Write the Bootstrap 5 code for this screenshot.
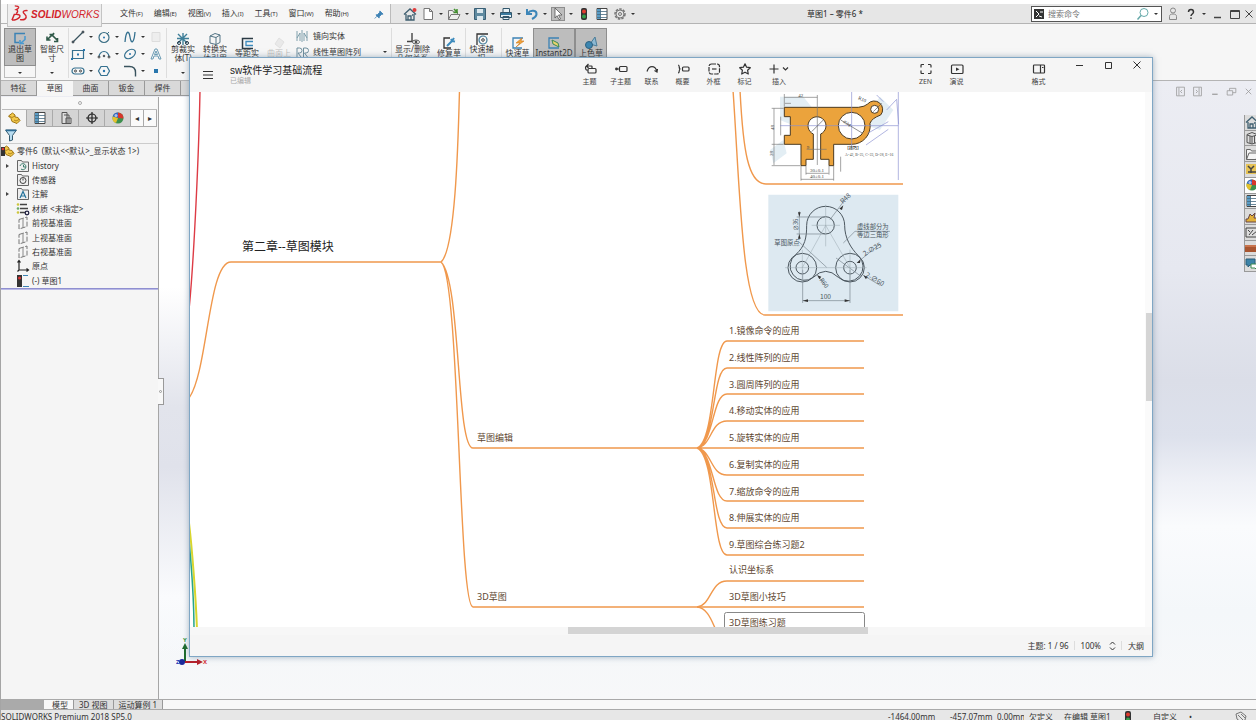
<!DOCTYPE html>
<html lang="zh-CN">
<head>
<meta charset="utf-8">
<meta name="viewport" content="width=device-width, initial-scale=1">
<title>草图1 – 零件6 * SOLIDWORKS</title>
<link rel="stylesheet" href="https://cdn.jsdelivr.net/npm/bootstrap@5.3.0/dist/css/bootstrap.min.css">
<style>
:root{--ink:#333;--line:#b4b4b4}
body{font:8px/12px "Noto Sans","Noto Sans CJK SC",sans-serif;color:var(--ink);background:#fff;overflow:hidden}
button{background:none;border:0;padding:0;margin:0;color:inherit;font:inherit;line-height:inherit;white-space:nowrap}
svg{display:block;flex:none}
.ic{width:14px;height:14px;fill:none;stroke:#444;stroke-width:1}
.app-shell{height:100vh;border-left:1px solid #a5a5a5}
.caret{width:12px;height:14px;display:flex;align-items:center;justify-content:center}
.caret::before{content:"";border:2px solid transparent;border-top-color:#333;border-bottom:0}

/* title bar */
.title-bar{height:24px;padding-top:4px;border-bottom:1px solid var(--line)}
.title-bar .strip{background:#e6e6e6}
.menu-strip{width:390px;background:#f6f6f6;border-right:1px solid #bbb}
.logo-box{width:95px;height:23px;margin-left:6px;background:#eee;border:1px solid #c4c4c4;border-top:0;position:relative;z-index:1;padding-left:3px}
.logo-text{font:italic 10px/22px "Liberation Sans",sans-serif;color:#d3242b;margin-left:2px}
.menus{gap:11px;margin-left:18px}
.menus small{font-size:6px}
.pressed{background:#bdbdbd;box-shadow:inset 0 0 0 1px #8e8e8e}
.doc-title{font-size:8px;color:#222}
.search-box{width:131px;height:16px;background:#fff;border:1px solid #555;padding:0 0 0 2px}
.search-box input{border:0;outline:0;background:none;width:88px;height:14px;padding:0;font:inherit;color:#777}

/* ribbon */
.ribbon{height:56px;background:#f6f6f6;padding:4px 0 0 3px}
.tool{display:flex;flex-direction:column;align-items:center;font-size:8px;line-height:9px;padding-top:4px;width:32px;height:38px}
.tool .ic{margin-bottom:-2px}
.tool.low{padding-top:8px}
.tool-col{height:50px}
.tool.w40{width:42px}
.exit-box{box-shadow:inset 0 0 0 1px #bbb}
.sketch-grid{display:grid;grid-template-columns:26px 26px 26px 18px;grid-auto-rows:17px;align-items:center;border-left:1px solid #ddd;border-right:1px solid #ddd;padding-left:2px;width:99px;height:50px}
.pattern-list{width:96px;line-height:16px}
.vr-line{border-left:1px solid #ddd}

/* workspace */
.workspace{border-top:1px solid var(--line);background:linear-gradient(#ecedf3 0,#e6e8f0 190px,#dbdee8 300px,#dde1ec 355px,#eef0f6 400px,#fafbfd 445px,#f4f7fa 530px,#f7f8f9)}
.cmd-tabs{height:16px}
.ctab{width:36px;height:15px;background:#d9d9d9;border-right:1px solid #999;border-bottom:1px solid #999;color:#333}
.ctab.on{background:#f6f6f6;border-color:#f6f6f6}
.mdi{padding-top:4px;gap:6px;margin-right:2px}
.mdi .ic{stroke:#999;width:11px;height:11px}
.tree-panel{width:158px;background:#f5f5f5;border-right:1px solid #a6a6a6}
.canvas-zone{background:linear-gradient(#fff 0,#fff 190px,#e2e4ec 310px,#e0e2eb 370px,#fafbfd 500px,#fff0 560px) 0 0/60px 100% no-repeat}
.grip{height:13px;margin:0 1px;border-bottom:1px solid #bbb;background:#f8f8f8}
.grip i{width:4px;height:4px;border:1px solid #aaa;border-radius:50%}
.ptab{width:26px;height:17px;display:flex;align-items:center;justify-content:center;background:#d4d4d4;border-right:1px solid #aaa;border-bottom:1px solid #aaa}
.ptab.on{background:#f5f5f5;border-bottom-color:#f5f5f5}
.ptab.arr{width:13px;background:#fafafa}
.filter{height:17px;border-bottom:1px solid #ccc;padding-left:3px}
.feature-tree{height:144px;margin:0;padding:0;list-style:none}
.feature-tree li{flex:1;display:flex;align-items:center;padding-left:15px;gap:2px;position:relative}
.feature-tree li.root{padding-left:0}
.feature-tree li.kids::before{content:"";position:absolute;left:5px;border:2px solid transparent;border-left:3px solid #444;border-right:0}
.rollback{height:2px;background:#b9b9e6;border-top:1px solid #8f8fd0}
.splitter{position:absolute;left:-1px;top:281px;width:6px;height:27px;background:#f8f8f8;border:1px solid #999;border-left:0}
.splitter i{width:3px;height:3px;border:1px solid #999;border-radius:50%}
.triad{position:absolute;left:17px;bottom:29px;font-size:6px;font-weight:700}
.task-pane{width:12px;height:157px;margin-top:18px;border-left:1px solid #999}
.task-pane button{flex:1;overflow:hidden;background:#dcdcdc;border-bottom:1px solid #999}

/* bottom */
.model-tabs{height:11px;background:#f8f8f8;border-top:1px solid #a9a9a9;border-bottom:1px solid #aaa;line-height:9px}
.model-tabs .nav-arrows{width:43px;background:#aaa}
.model-tabs button{height:9px;padding:0 5px;background:#ddd;border-right:1px solid #999}
.model-tabs button.on{background:#f8f8f8;padding:0 5px 0 8px}
.status-bar{height:10px;background:#e7e7e7;line-height:14px}
.status-bar span{flex:none;white-space:nowrap}
.st-a{width:62px}.st-b{width:47px}.st-c{width:27px;margin-right:5px;overflow:hidden}.st-d{width:35px}.st-e{width:57px}.st-f{width:32px}.st-g{width:36px}.st-h{width:45px}.st-i{width:8px}

/* mind-map window */
.map-window{position:absolute;left:189px;top:57px;right:103px;bottom:63px;background:#fff;border:1px solid #7fa6c4;box-shadow:0 0 6px #5a7a9488}
.map-head{height:34px;background:#f5f5f5}
.map-head .name{font:10px/11px "Liberation Sans","Noto Sans CJK SC",sans-serif;color:#222;margin-top:7px}
.map-head .sub{font-size:7px;line-height:9px;color:#aaa}
.mtool{width:31px;font-size:7px;line-height:9px;display:flex;flex-direction:column;align-items:center;color:#444;padding-top:4px}
.mtool .ic{stroke:#333;stroke-width:1.2;margin-bottom:1px}
.mtool.insert{width:38px}
.ic.wide{width:22px}
.map-tools{margin-right:112px}
.zen-tools{margin-right:51px}
.fmt-tool{margin-right:11px}
.win-btns .ic{stroke:#333;margin:0 8px 0 7px}
.map-body{background:#fff}
.map-body>svg{position:absolute;left:0;top:0}
.topic{position:absolute;font:9px/12px "Noto Sans","Noto Sans CJK SC",sans-serif;color:#5d4630;margin:0}
.topic.big{font-size:12px;line-height:16px;color:#222;left:52px;top:147px}
.t-edit{left:287px;top:340px}
.t-3d{left:287px;top:499px}
ul.topic{list-style:none;padding:0;display:flex;flex-direction:column;justify-content:space-between}
.apply-list{left:539px;top:233px;height:226px}
.three-list{left:539px;top:472px;height:65px}
.vbar{position:absolute;right:0;top:0;bottom:0;width:7px;background:#fafafa}
.vbar i{position:absolute;top:221px;right:0;width:6px;height:88px;background:#d5d5d5}
.hbar{height:8px;background:#f7f7f7}
.hbar i{display:block;margin-left:378px;width:300px;height:7px;background:#d4d4d4}
.map-foot{height:21px;background:#f5f5f5;padding-right:8px;color:#333}
.map-foot .sep{width:1px;height:9px;background:#ddd;margin:0 5px}
.map-foot .sep+button{margin-left:1px}
</style>
</head>
<body>
<svg width="0" height="0" class="position-absolute" aria-hidden="true">
  <symbol id="i-home" viewBox="0 0 14 14"><path d="M1 7.500 7 2l6 5.500M3 7v6h8V7M5 13V9h3v4M9 8h1" stroke="#3f5f70" stroke-width="1.300"/></symbol>
  <symbol id="i-new" viewBox="0 0 14 14"><path d="M3 1.500h5.500l3 3v8H3zM8.500 1.500v3h3" fill="#fff" stroke="#777"/></symbol>
  <symbol id="i-open" viewBox="0 0 14 14"><path d="M1.500 12.500v-9h4l1 1.500h4v3M1.500 12.500 4 7.500h9l-2.500 5z" fill="#eee" stroke="#777"/><path d="m7 2 3 3m0-3v3.500H6.500" stroke="#43912f" stroke-width="1.500"/></symbol>
  <symbol id="i-save" viewBox="0 0 14 14"><path d="M1.500 1.500h11v11h-11z" fill="#5f8aa0" stroke="#3a5f75"/><path d="M4 2h6v4H4zM4 9h6v4H4z" fill="#dce8ee" stroke="none"/></symbol>
  <symbol id="i-print" viewBox="0 0 14 14"><path d="M4 5V1.500h6.500V5M1.500 5.500h11v5h-11zM4 9.500h6v3H4z" fill="#e8f2f7" stroke="#32566b"/><path d="M2 6h10v2H2z" fill="#3a7ba0" stroke="none"/></symbol>
  <symbol id="i-undo" viewBox="0 0 14 14"><path d="M2 2v5h5M2.500 6.500C6 2 12 3.500 11.500 7.500 11 10 9 11 7 12" stroke="#3d86b8" stroke-width="2"/></symbol>
  <symbol id="i-arrow" viewBox="0 0 14 14"><path d="m4 1 7 7H7.500l2 4-1.500.700-2-4L4 11z" fill="#fff" stroke="#555" stroke-width=".8"/></symbol>
  <symbol id="i-light" viewBox="0 0 14 14"><rect x="4" y="1" width="6" height="12" rx="2" fill="#333" stroke="none"/><circle cx="7" cy="4.500" r="2" fill="#e23a2e" stroke="none"/><circle cx="7" cy="9.500" r="2" fill="#35a04a" stroke="none"/></symbol>
  <symbol id="i-list" viewBox="0 0 14 14"><path d="M2 1.500h10v11H2z" fill="#fff"/><path d="M2 2h3.500v10H2z" fill="#5a9cc5" stroke="none"/><path d="M2 4.500h10M2 7.500h10M2 10.500h10M5.500 2v10" stroke="#456a80" stroke-width=".8"/></symbol>
  <symbol id="i-gear" viewBox="0 0 14 14"><circle cx="7" cy="7" r="5" stroke-dasharray="2.500 1.200" stroke-width="1.500" stroke="#777"/><circle cx="7" cy="7" r="4" stroke="#777"/><circle cx="7" cy="7" r="1.500" stroke="#777"/></symbol>
  <symbol id="i-pin" viewBox="0 0 14 14"><path d="m8 3 4 4-2 .500L7.500 10 7 12 3 8l2-.500L7.500 5zM4.500 9.500 1.500 12.500" fill="#3f83b5" stroke="#3f83b5" transform="translate(1.500 1.500) scale(.8)"/></symbol>
  <symbol id="i-lens" viewBox="0 0 14 14"><circle cx="8" cy="5.500" r="4" stroke="#6aa"/><path d="M5 8.500 1.500 12.500" stroke="#6aa" stroke-width="1.500"/></symbol>
  <symbol id="i-user" viewBox="0 0 14 14"><circle cx="7" cy="3.500" r="2.500" stroke="#888"/><path d="M3.500 12.500v-3C3.500 7.500 5 7 7 7s3.500.500 3.500 2.500v3z" stroke="#888"/></symbol>
  <symbol id="i-help" viewBox="0 0 14 14"><path d="M4.500 5c0-3.500 5-3.500 5 0 0 2-2.500 2-2.500 4M7 10.500v1.500" stroke="#333" stroke-width="1.500"/></symbol>
  <symbol id="i-min" viewBox="0 0 14 14"><path d="M4 10.500h7" stroke-width="1.500"/></symbol>
  <symbol id="i-max" viewBox="0 0 14 14"><path d="M2.500 3.500h9v8h-9z"/><path d="M2.500 4.500h9"/></symbol>
  <symbol id="i-x" viewBox="0 0 14 14"><path d="m3.500 3.500 7 7m0-7-7 7"/></symbol>
  <symbol id="i-exit" viewBox="0 0 14 14"><path d="M12 1.500H2v9h4" stroke="#3c83b5" stroke-width="1.500"/><path d="M12 4v3.500L8 11M7 8v3.500h4" stroke="#4b9bd0" stroke-width="1.600"/></symbol>
  <symbol id="i-dim" viewBox="0 0 14 14"><path d="M2 8 7 3l5 5M2 4.500V8h3.500M4.500 2.500h3.500l1-1.500M9 9.500h3.500V6M7 3l2-1.500" stroke="#2f5948" stroke-width="1.600"/></symbol>
  <symbol id="i-line" viewBox="0 0 14 14"><path d="M2 12 12 2" stroke="#39535e" stroke-width="1.200"/><circle cx="2" cy="12" r="1" fill="#3c7ea8"/><circle cx="12" cy="2" r="1" fill="#3c7ea8"/></symbol>
  <symbol id="i-circ" viewBox="0 0 14 14"><circle cx="7" cy="7.500" r="5" stroke="#3b6f85" stroke-width="1.200"/><circle cx="7" cy="7.500" r="1" fill="#2876ad" stroke="none"/><path d="m10 4 2-2" stroke="#3b6f85"/></symbol>
  <symbol id="i-spline" viewBox="0 0 14 14"><path d="M2 12C3 0 6 0 7 7s4 7 5-5" stroke="#34708f" stroke-width="1.300"/></symbol>
  <symbol id="i-rect" viewBox="0 0 14 14"><path d="M1.500 3.500h11v8h-11z" stroke="#34708f" stroke-width="1.200"/><path d="M6 6.500h2v2H6zM12 2h2v2h-2zM0 11h2v2H0z" fill="#2876ad" stroke="none"/></symbol>
  <symbol id="i-arc" viewBox="0 0 14 14"><path d="M2 10a5 5.500 0 0 1 10 0" stroke="#34708f" stroke-width="1.200"/><circle cx="2" cy="10" r="1"/><circle cx="12" cy="10" r="1"/><circle cx="7" cy="9" r=".8" fill="#2876ad"/></symbol>
  <symbol id="i-ell" viewBox="0 0 14 14"><ellipse cx="7" cy="7" rx="6" ry="4" transform="rotate(-35 7 7)" stroke="#34708f" stroke-width="1.200"/><circle cx="7" cy="7" r="1" fill="#2876ad" stroke="none"/></symbol>
  <symbol id="i-slot" viewBox="0 0 14 14"><rect x="1" y="4" width="12" height="6" rx="3" stroke="#34708f" stroke-width="1.200"/><circle cx="4.500" cy="7" r="1"/><circle cx="9.500" cy="7" r="1"/></symbol>
  <symbol id="i-hex" viewBox="0 0 14 14"><path d="M4 2.500h6L12.500 7 10 11.500H4L1.500 7z" stroke="#34708f" stroke-width="1.200"/><circle cx="7" cy="7" r="1.200" fill="#2876ad" stroke="none"/></symbol>
  <symbol id="i-fillet" viewBox="0 0 14 14"><path d="M1 2.500h5.500c4 0 6 2 6 6v4" stroke="#39535e" stroke-width="1.400"/></symbol>
  <symbol id="i-sheet" viewBox="0 0 14 14"><path d="M3 2.500h8v9H3z" stroke="#ddd" fill="#eee"/></symbol>
  <symbol id="i-A" viewBox="0 0 14 14"><path d="m2 12 4-10h2l4 10h-2L9 9H5l-1 3zM5.500 7.500h3L7 4z" stroke="#5c92ad" stroke-width=".9"/></symbol>
  <symbol id="i-dot" viewBox="0 0 14 14"><path d="M5 5h4v4H5z" fill="#2876ad" stroke="none"/></symbol>
  <symbol id="i-trim" viewBox="0 0 14 14"><path d="m2 2 9 9M2 11l9-9M7 1v12M1 6.500h12" stroke="#3f7f99" stroke-width="1.400"/><circle cx="3" cy="11" r="1.500" stroke="#234"/><circle cx="11" cy="11" r="1.500" stroke="#234"/></symbol>
  <symbol id="i-conv" viewBox="0 0 14 14"><path d="M2 4 7 1.500 12 3v7.500L8 12.500 2 11zM2 4l6 1.500v7M8 5.500 12 3" stroke="#537485"/></symbol>
  <symbol id="i-off" viewBox="0 0 14 14"><path d="M13 2.500H2.500v10H13" stroke="#2b3b45" stroke-width="1.500"/><path d="M13 5.500H6v4h7" stroke="#3d8bbd" stroke-width="1.300"/></symbol>
  <symbol id="i-surf" viewBox="0 0 14 14"><path d="m3 8 4-6 5 4-4 6z" fill="#ddd" stroke="#ccc"/></symbol>
  <symbol id="i-mirror" viewBox="0 0 14 14"><path d="M2 2v10M5 12V4L2 9M7 1v12M12 2v10M9 12V4l3 5" stroke="#7497a5" stroke-width=".9"/></symbol>
  <symbol id="i-patt" viewBox="0 0 14 14"><path d="M2 12V3h2.500a2 2 0 0 1 0 5H3l3 4M8.500 12V3H11a2 2 0 0 1 0 5h-1.500l3 4" stroke="#6f8f9d"/></symbol>
  <symbol id="i-perp" viewBox="0 0 14 14"><path d="M6 1v8M1 9.500h9" stroke="#444" stroke-width="1.400"/><ellipse cx="10" cy="10" rx="3.500" ry="2" fill="#fff" stroke="#555"/><circle cx="10" cy="10" r="1" fill="#333"/></symbol>
  <symbol id="i-repair" viewBox="0 0 14 14"><path d="M8 2H2v10h7" stroke="#333" stroke-width="1.300"/><path d="m5 10 5-5m-1-2 1 2 3 .500M10 5l2-3" stroke="#3d8bbd" stroke-width="2"/></symbol>
  <symbol id="i-snap" viewBox="0 0 14 14"><path d="M2 13V2h11" stroke="#333" stroke-width="1.300"/><circle cx="8" cy="8" r="4" stroke="#3f7b99" stroke-width="1.200"/><circle cx="8" cy="8" r="1.300"/></symbol>
  <symbol id="i-rapid" viewBox="0 0 14 14"><path d="M12 2H2v10h9" stroke="#3c83b5" stroke-width="1.300"/><path d="m11 2-6 5h4l-4 4 8-6h-3z" fill="#f0a33c" stroke="#d07a1c" stroke-width=".6"/></symbol>
  <symbol id="i-inst" viewBox="0 0 14 14"><path d="M12 2H2v10h10" stroke="#3c83b5" stroke-width="1.300"/><path d="m5 4 6 3 1 4-6-3z" fill="#e9d36b" stroke="#3b8a58"/></symbol>
  <symbol id="i-shade" viewBox="0 0 14 14"><path d="m6 8 5-7 2 9z" fill="#8cb8d2" stroke="#4a7c98"/><circle cx="5" cy="9" r="3.500" fill="#3d86b0" stroke="#2d617f"/></symbol>
  <symbol id="i-part" viewBox="0 0 14 14"><path d="m1.500 5 4-3 2.500 2v2l3 .500 2 3-3 3-5-2-1-3z" fill="#f3c94a" stroke="#a07514"/><path d="m2 5 3 1.500L8 5M7 9l2 1 3-1.500" stroke="#a07514" stroke-width=".8"/></symbol>
  <symbol id="i-conf" viewBox="0 0 14 14"><path d="M3 1.500h5v11H3zM5 4h5v8.500M7 7h5v5.500H7z" fill="#ddd" stroke="#555"/></symbol>
  <symbol id="i-target" viewBox="0 0 14 14"><circle cx="7" cy="7" r="4" stroke-width="1.200" stroke="#222"/><path d="M7 1v12M1 7h12" stroke="#222" stroke-width="1.200"/></symbol>
  <symbol id="i-ball" viewBox="0 0 14 14"><g stroke="none"><circle cx="7" cy="7" r="5.500" fill="#3d8f4e"/><path d="M7 7V1.500a5.500 5.500 0 0 0-5.300 4z" fill="#3567c4"/><path d="M7 7 1.700 5.500A5.500 5.500 0 0 0 5 12.100z" fill="#e4c12c"/><path d="M7 7V1.500a5.500 5.500 0 0 1 5.400 6z" fill="#d8352a"/><circle cx="5" cy="4.500" r="1.500" fill="#fff9"/></g></symbol>
  <symbol id="i-funnel" viewBox="0 0 14 14"><path d="M1.500 2h11L8.500 7.500V12l-3 1V7.500z" fill="#b8dcf0" stroke="#33596e"/><path d="M2 2.500h10" stroke="#2b6b95" stroke-width="1.500"/></symbol>
  <symbol id="i-folder" viewBox="0 0 14 14"><path d="M1.500 12.500v-11h4l1 1.500h6v9.500z" fill="#eee" stroke="#666"/></symbol>
  <symbol id="i-fold-h" viewBox="0 0 14 14"><use href="#i-folder"/><path d="M4 7a3 3 0 1 1 1 3M7.500 6v2h2" stroke="#3c7c6c"/></symbol>
  <symbol id="i-fold-s" viewBox="0 0 14 14"><use href="#i-folder"/><circle cx="7" cy="7.500" r="3" stroke="#444"/><path d="M7 7.500V5.500" stroke="#444"/></symbol>
  <symbol id="i-fold-a" viewBox="0 0 14 14"><use href="#i-folder"/><path d="M4 11 7 4.500 10 11M5 9h4" stroke="#26749c" stroke-width="1.200"/></symbol>
  <symbol id="i-mat" viewBox="0 0 14 14"><path d="M4 2.500h7M4 6.500h8M4 10.500h5" stroke="#444" stroke-width="1.300"/><g stroke="none"><circle cx="2" cy="2.500" r="1.300" fill="#cdc63c"/><circle cx="2" cy="6.500" r="1.300" fill="#6aab6a"/><circle cx="2" cy="10.500" r="1.300" fill="#cdc63c"/></g><circle cx="11" cy="11" r="1.800" stroke="#224" stroke-width="1.300"/></symbol>
  <symbol id="i-plane" viewBox="0 0 14 14"><path d="M3 3.500 11 1v9.500L3 13z" stroke="#777" stroke-dasharray="5 1.500"/><path d="M7 2v10" stroke="#888"/></symbol>
  <symbol id="i-orig" viewBox="0 0 14 14"><path d="M3 2v9h9M1.500 3.500 3 1.500l1.500 2M10.500 9.500l2 1.500-2 1.500M1.500 12.500 3 11" stroke="#222" stroke-width="1.200"/></symbol>
  <symbol id="i-sk" viewBox="0 0 14 14"><rect x="1" y="1" width="5" height="12" fill="#333" stroke="none"/><circle cx="3.500" cy="4" r="1.500" fill="#d33" stroke="none"/><path d="M7 1.500h5M7 12.500h6" stroke="#3c83b5"/></symbol>
  <symbol id="i-dockl" viewBox="0 0 14 14"><path d="M2 1.500h10v11H2zM5 2v10M9 5 7 7l2 2"/></symbol>
  <symbol id="i-dockr" viewBox="0 0 14 14"><path d="M2 1.500h10v11H2zM9 2v10M5 5l2 2-2 2"/></symbol>
  <symbol id="i-rest" viewBox="0 0 14 14"><path d="M1.500 6h7v5.500h-7zM4.500 6V3h8v5.500h-4"/></symbol>
  <symbol id="i-cyl" viewBox="0 0 14 14"><path d="M2 3.500 7 1.500l5 2v8l-5 1.500-5-1.500zM2 4l5 1.500L12 4M5 5v7M7 5.500V13M9.500 5v7" fill="#ddd" stroke="#555"/></symbol>
  <symbol id="i-dir" viewBox="0 0 14 14"><path d="M1.500 12.500v-10h4l1 1.500h6v2M1.500 12.500 4 6h9.500l-2.500 6.500z" fill="#f4f4f4" stroke="#666"/></symbol>
  <symbol id="i-view" viewBox="0 0 14 14"><path d="M1 2h13v10H1z" fill="#e6c356" stroke="none"/><path d="m3 4 3 3 3-3M6 7v4M3 10h8" stroke="#444" stroke-width="1.500"/></symbol>
  <symbol id="i-stamp" viewBox="0 0 14 14"><path d="M1 12h12V8H9l1-5-3 3-2-2-2 5H1z" fill="#e2b13a" stroke="#644"/></symbol>
  <symbol id="i-pic" viewBox="0 0 14 14"><path d="M1 3h12v9H1z" fill="#ddd"/><path d="m3 5 2 2m3-2-4 5m3 0 5-4" stroke="#444"/></symbol>
  <symbol id="i-box" viewBox="0 0 14 14"><path d="M0 4h14v7H0z" fill="#a85530" stroke="none"/><path d="M0 4h14v2H0z" fill="#c8734d" stroke="none"/></symbol>
  <symbol id="i-chat" viewBox="0 0 14 14"><path d="M1 2h9v6H5l-2 2V8H1z" fill="#3c83a8" stroke="#2b5e7a"/><path d="M6 7h7v4h-1v2l-2-2H6z" fill="#fff" stroke="#3a8a50"/></symbol>
  <symbol id="m-top" viewBox="0 0 14 14"><rect x="5" y="6.500" width="8" height="4.500" rx="1"/><path d="M9 6V4.500Q9 4 8.500 4H4.500Q2.500 4 2.500 6T4.500 8.500M5.500 2 3.500 4l2 2"/></symbol>
  <symbol id="m-sub" viewBox="0 0 14 14"><rect x="5.500" y="4.500" width="7.500" height="5" rx="1"/><path d="M5 7H3"/><circle cx="2.500" cy="7" r=".8" fill="#333"/></symbol>
  <symbol id="m-rel" viewBox="0 0 14 14"><path d="M2 9.500c2-6.500 8-6.500 10 0M9.500 8.500l2.500 1.500.500-3"/></symbol>
  <symbol id="m-sum" viewBox="0 0 14 14"><path d="M2 3c2.500 0 0 4 2.500 4C2 7 4.500 11 2 11"/><rect x="6.500" y="5" width="6.500" height="4" rx="1"/></symbol>
  <symbol id="m-box" viewBox="0 0 14 14"><rect x="2" y="2" width="10.500" height="10" rx="2.500" stroke-dasharray="4.500 1"/><path d="M5 7h4.500"/></symbol>
  <symbol id="m-star" viewBox="0 0 14 14"><path d="m7 1.800 1.600 3.400 3.700.500-2.700 2.600.700 3.700L7 10.200 3.700 12l.700-3.700L1.700 5.700l3.700-.500z" stroke-linejoin="round"/></symbol>
  <symbol id="m-plus" viewBox="0 0 22 14"><path d="M6 2.500v9M1.500 7h9M15 5.500l2.500 2.500L20 5.500"/></symbol>
  <symbol id="m-zen" viewBox="0 0 14 14"><path d="M2 5.500V3.500Q2 2.500 3 2.500h2M9 2.500h2q1 0 1 1v2M12 8.500v2q0 1-1 1H9M5 11.500H3q-1 0-1-1v-2"/></symbol>
  <symbol id="m-play" viewBox="0 0 14 14"><rect x="1.500" y="3" width="11.500" height="8.500" rx="1"/><path d="m6 5.500 3.500 1.700L6 9z" fill="#333" stroke="none"/></symbol>
  <symbol id="m-fmt" viewBox="0 0 14 14"><rect x="1.500" y="3" width="11" height="8" rx=".8"/><path d="M8.500 3v8M10 5.500h1.500"/></symbol>
</svg>

<div class="app-shell d-flex flex-column">
  <header class="title-bar d-flex flex-shrink-0">
    <div class="menu-strip d-flex flex-shrink-0">
      <div class="logo-box d-flex flex-shrink-0">
        <svg width="18" height="18" viewBox="0 0 36 38" fill="none" stroke="#d3242b" stroke-width="3"><path d="M7 4c5 0 9 1 8 4-1 2-3 3-5 4 4 1 4 5 0 8M1 34l5-12c9-1 14 1 11 6-3 4-8 6-16 6M34 14c-6-1-10 1-9 4s7 5 6 10-7 6-13 5"/></svg>
        <span class="logo-text"><b>SOLID</b>WORKS</span>
      </div>
      <nav class="menus d-flex align-items-center">
        <button>文件<small>(F)</small></button><button>编辑<small>(E)</small></button><button>视图<small>(V)</small></button><button>插入<small>(I)</small></button><button>工具<small>(T)</small></button><button>窗口<small>(W)</small></button><button>帮助<small>(H)</small></button>
      </nav>
      <button class="ms-auto me-1" aria-label="固定"><svg class="ic"><use href="#i-pin"/></svg></button>
    </div>
    <div class="strip d-flex align-items-center flex-grow-1">
      <div class="d-flex align-items-center flex-shrink-0 ps-2">
        <button aria-label="主页" class="ms-1"><svg class="ic"><use href="#i-home"/><circle cx="11.500" cy="3" r="2" fill="#e03b3b" stroke="none"/></svg></button>
        <button class="d-flex ms-1" aria-label="新建"><svg class="ic"><use href="#i-new"/></svg><span class="caret"></span></button>
        <button class="d-flex" aria-label="打开"><svg class="ic"><use href="#i-open"/></svg><span class="caret"></span></button>
        <button class="d-flex" aria-label="保存"><svg class="ic"><use href="#i-save"/></svg><span class="caret"></span></button>
        <button class="d-flex" aria-label="打印"><svg class="ic"><use href="#i-print"/></svg><span class="caret"></span></button>
        <button class="d-flex" aria-label="撤消"><svg class="ic"><use href="#i-undo"/></svg><span class="caret"></span></button>
        <button class="d-flex" aria-label="选择"><span class="pressed"><svg class="ic"><use href="#i-arrow"/></svg></span><span class="caret"></span></button>
        <button aria-label="重建模型"><svg class="ic"><use href="#i-light"/></svg></button>
        <button aria-label="文件属性" class="ms-1"><svg class="ic"><use href="#i-list"/></svg></button>
        <button aria-label="选项" class="d-flex ms-1"><svg class="ic"><use href="#i-gear"/></svg><span class="caret"></span></button>
      </div>
      <div class="doc-title flex-grow-1 text-center">草图1 – 零件6 *</div>
      <div class="search-box d-flex align-items-center flex-shrink-0">
        <svg width="10" height="10" viewBox="0 0 10 10"><path d="M0 0h10v10H0z" fill="#333"/><path d="m2 2 3 3-3 3M6 3h3M5 7l3 1" stroke="#fff" fill="none"/></svg>
        <label for="q" class="visually-hidden">搜索命令</label><input id="q" type="text" class="ms-1" placeholder="搜索命令">
        <svg class="ic ms-auto"><use href="#i-lens"/></svg><span class="caret"></span>
      </div>
      <button aria-label="登录" class="ms-1"><svg class="ic"><use href="#i-user"/></svg></button>
      <button class="ms-1" aria-label="帮助"><svg class="ic"><use href="#i-help"/></svg></button>
      <span class="caret"></span>
      <button aria-label="最小化"><svg class="ic"><use href="#i-min"/></svg></button>
      <button aria-label="最大化" class="ms-1"><svg class="ic"><use href="#i-max"/></svg></button>
      <button aria-label="关闭"><svg class="ic"><use href="#i-x"/></svg></button>
    </div>
  </header>

  <div class="ribbon d-flex flex-shrink-0">
    <div class="tool-col exit-box"><button class="tool pressed"><svg class="ic"><use href="#i-exit"/></svg>退出草<br>图</button><span class="caret mx-auto"></span></div>
    <div class="tool-col"><button class="tool"><svg class="ic"><use href="#i-dim"/></svg>智能尺<br>寸</button><span class="caret mx-auto"></span></div>
    <div class="sketch-grid">
      <button class="d-flex" aria-label="直线"><svg class="ic"><use href="#i-line"/></svg><span class="caret"></span></button>
      <button class="d-flex" aria-label="圆"><svg class="ic"><use href="#i-circ"/></svg><span class="caret"></span></button>
      <button class="d-flex" aria-label="样条曲线"><svg class="ic"><use href="#i-spline"/></svg><span class="caret"></span></button>
      <button aria-label="平面"><svg class="ic"><use href="#i-sheet"/></svg></button>
      <button class="d-flex" aria-label="矩形"><svg class="ic"><use href="#i-rect"/></svg><span class="caret"></span></button>
      <button class="d-flex" aria-label="圆弧"><svg class="ic"><use href="#i-arc"/></svg><span class="caret"></span></button>
      <button class="d-flex" aria-label="椭圆"><svg class="ic"><use href="#i-ell"/></svg><span class="caret"></span></button>
      <button aria-label="文字"><svg class="ic"><use href="#i-A"/></svg></button>
      <button class="d-flex" aria-label="槽口"><svg class="ic"><use href="#i-slot"/></svg><span class="caret"></span></button>
      <button aria-label="多边形"><svg class="ic"><use href="#i-hex"/></svg></button>
      <button class="d-flex" aria-label="圆角"><svg class="ic"><use href="#i-fillet"/></svg><span class="caret"></span></button>
      <button aria-label="点"><svg class="ic"><use href="#i-dot"/></svg></button>
    </div>
    <div class="tool-col"><button class="tool"><svg class="ic"><use href="#i-trim"/></svg>剪裁实<br>体(T)</button><span class="caret mx-auto"></span></div>
    <button class="tool"><svg class="ic"><use href="#i-conv"/></svg>转换实<br>体引用</button>
    <button class="tool low"><svg class="ic"><use href="#i-off"/></svg>等距实</button>
    <button class="tool low text-black-50 opacity-50"><svg class="ic"><use href="#i-surf"/></svg>曲面上</button>
    <div class="pattern-list">
      <button class="d-flex align-items-center gap-1"><svg class="ic"><use href="#i-mirror"/></svg>镜向实体</button>
      <button class="d-flex align-items-center gap-1 w-100"><svg class="ic"><use href="#i-patt"/></svg>线性草图阵列<span class="caret ms-auto"></span></button>
    </div>
    <button class="tool w40 vr-line"><svg class="ic"><use href="#i-perp"/></svg>显示/删除<br>几何关系</button>
    <button class="tool low"><svg class="ic"><use href="#i-repair"/></svg>修复草</button>
    <button class="tool vr-line"><svg class="ic"><use href="#i-snap"/></svg>快速捕<br>捉</button>
    <button class="tool vr-line low ms-1"><svg class="ic"><use href="#i-rapid"/></svg>快速草</button>
    <button class="tool low w40 pressed"><svg class="ic"><use href="#i-inst"/></svg>Instant2D</button>
    <button class="tool low pressed"><svg class="ic"><use href="#i-shade"/></svg>上色草</button>
  </div>

  <main class="workspace flex-grow-1 d-flex flex-column">
    <div class="cmd-tabs d-flex flex-shrink-0">
      <button class="ctab">特征</button><button class="ctab on">草图</button><button class="ctab">曲面</button><button class="ctab">钣金</button><button class="ctab">焊件</button><button class="ctab" aria-label="更多"></button>
      <div class="mdi d-flex ms-auto">
        <button aria-label="左停靠"><svg class="ic"><use href="#i-dockl"/></svg></button><button aria-label="右停靠"><svg class="ic"><use href="#i-dockr"/></svg></button><button aria-label="最小化文档"><svg class="ic"><use href="#i-min"/></svg></button><button aria-label="还原文档"><svg class="ic"><use href="#i-rest"/></svg></button><button aria-label="关闭文档"><svg class="ic"><use href="#i-x"/></svg></button>
      </div>
    </div>
    <div class="d-flex flex-grow-1">
      <aside class="tree-panel flex-shrink-0">
        <div class="grip d-flex justify-content-center align-items-center"><i></i></div>
        <div class="d-flex">
          <button class="ptab on" aria-label="设计树"><svg class="ic"><use href="#i-part"/></svg></button><button class="ptab" aria-label="属性"><svg class="ic"><use href="#i-list"/></svg></button><button class="ptab" aria-label="配置"><svg class="ic"><use href="#i-conf"/></svg></button><button class="ptab" aria-label="尺寸专家"><svg class="ic"><use href="#i-target"/></svg></button><button class="ptab" aria-label="外观"><svg class="ic"><use href="#i-ball"/></svg></button><button class="ptab arr" aria-label="向左">◂</button><button class="ptab arr" aria-label="向右">▸</button>
        </div>
        <div class="filter d-flex align-items-center"><svg class="ic"><use href="#i-funnel"/></svg></div>
        <ul class="feature-tree d-flex flex-column">
          <li class="root"><svg class="ic"><use href="#i-part"/><path d="M0 3h4v9H0z" fill="#333" stroke="none"/><circle cx="2" cy="5" r="1.300" fill="#d33" stroke="none"/></svg>零件6&nbsp; (默认&lt;&lt;默认&gt;_显示状态 1&gt;)</li>
          <li class="kids"><svg class="ic"><use href="#i-fold-h"/></svg>History</li>
          <li><svg class="ic"><use href="#i-fold-s"/></svg>传感器</li>
          <li class="kids"><svg class="ic"><use href="#i-fold-a"/></svg>注解</li>
          <li><svg class="ic"><use href="#i-mat"/></svg>材质 &lt;未指定&gt;</li>
          <li><svg class="ic"><use href="#i-plane"/></svg>前视基准面</li>
          <li><svg class="ic"><use href="#i-plane"/></svg>上视基准面</li>
          <li><svg class="ic"><use href="#i-plane"/></svg>右视基准面</li>
          <li><svg class="ic"><use href="#i-orig"/></svg>原点</li>
          <li><svg class="ic"><use href="#i-sk"/></svg>(-) 草图1</li>
        </ul>
        <div class="rollback"></div>
      </aside>
      <section class="canvas-zone flex-grow-1 position-relative d-flex justify-content-end align-items-start">
        <div class="splitter d-flex align-items-center justify-content-center"><i></i></div>
        <svg class="triad" width="34" height="34" viewBox="0 0 34 34"><path d="M9 26V10" stroke="#1d6b2a" stroke-width="2"/><path d="m9 7-3 6h6z" fill="#1d6b2a"/><path d="M9 26h14" stroke="#b5202a" stroke-width="2"/><path d="m27 26-6-3v6z" fill="#b5202a"/><circle cx="6" cy="26" r="3" fill="#1b2a9c"/><text x="7" y="6" fill="#3a9a48">Y</text><text x="27" y="28" fill="#d8323a">X</text><text x="0" y="28" fill="#2438b0">Z</text></svg>
        <div class="task-pane d-flex flex-column">
          <button aria-label="资源"><svg class="ic"><use href="#i-home"/></svg></button><button aria-label="设计库"><svg class="ic"><use href="#i-cyl"/></svg></button><button aria-label="文件探索器"><svg class="ic"><use href="#i-dir"/></svg></button><button aria-label="视图调色板"><svg class="ic"><use href="#i-view"/></svg></button><button aria-label="外观库" class="bg-white"><svg class="ic"><use href="#i-ball"/></svg></button><button aria-label="自定义属性"><svg class="ic"><use href="#i-list"/></svg></button><button aria-label="工具箱"><svg class="ic"><use href="#i-stamp"/></svg></button><button aria-label="图片"><svg class="ic"><use href="#i-pic"/></svg></button><button aria-label="材料"><svg class="ic"><use href="#i-box"/></svg></button><button aria-label="论坛"><svg class="ic"><use href="#i-chat"/></svg></button>
        </div>
      </section>
    </div>
  </main>

  <div class="model-tabs d-flex flex-shrink-0"><div class="nav-arrows"></div><button class="on">模型</button><button>3D 视图</button><button>运动算例 1</button></div>
  <footer class="status-bar d-flex flex-shrink-0">
    <span class="me-auto">SOLIDWORKS Premium 2018 SP5.0</span>
    <span class="st-a">-1464.00mm</span><span class="st-b">-457.07mm</span><span class="st-c">0.00mm</span><span class="st-d">欠定义</span><span class="st-e">在编辑 草图1</span><span class="st-f"><svg class="ic"><use href="#i-light"/></svg></span><span class="st-g">自定义</span><span class="st-h">•</span><svg class="ic"><path d="m2 4 5-2 5 4-1 4-4 2-4-3zM4 5l5 5M7 4l4 4" stroke="#777"/></svg><span class="st-i"></span>
  </footer>
</div>

<div class="map-window d-flex flex-column">
  <header class="map-head d-flex flex-shrink-0">
    <button class="ms-2 ps-1" aria-label="菜单"><svg width="12" height="12" viewBox="0 0 12 12" stroke="#333" stroke-width="1.200"><path d="M1 2.500h10M1 6h10M1 9.500h10"/></svg></button>
    <div class="ms-3 me-auto"><div class="name">sw软件学习基础流程</div><div class="sub">已编辑</div></div>
    <div class="d-flex map-tools">
      <button class="mtool"><svg class="ic"><use href="#m-top"/></svg>主题</button><button class="mtool"><svg class="ic"><use href="#m-sub"/></svg>子主题</button><button class="mtool"><svg class="ic"><use href="#m-rel"/></svg>联系</button><button class="mtool"><svg class="ic"><use href="#m-sum"/></svg>概要</button><button class="mtool"><svg class="ic"><use href="#m-box"/></svg>外框</button><button class="mtool"><svg class="ic"><use href="#m-star"/></svg>标记</button><button class="mtool insert"><svg class="ic wide"><use href="#m-plus"/></svg>插入</button>
    </div>
    <div class="d-flex zen-tools"><button class="mtool"><svg class="ic"><use href="#m-zen"/></svg>ZEN</button><button class="mtool"><svg class="ic"><use href="#m-play"/></svg>演说</button></div>
    <button class="mtool fmt-tool"><svg class="ic"><use href="#m-fmt"/></svg>格式</button>
    <div class="win-btns d-flex align-items-start">
      <button aria-label="最小化窗口"><svg class="ic"><path d="M4 7.500h7"/></svg></button><button aria-label="最大化窗口"><svg class="ic"><path d="M4.500 4.500h6v6h-6z"/></svg></button><button aria-label="关闭窗口"><svg class="ic"><use href="#i-x"/></svg></button>
    </div>
  </header>
  <div class="map-body flex-grow-1 position-relative overflow-hidden">
    <svg width="955" height="536" viewBox="190 92 955 536" fill="none" stroke="#f0984c" stroke-width="1.400">
      <path d="M200 90C199 150 194 260 189 310" stroke="#dd3b45"/>
      <path d="M188 515C192 545 196 600 197 630" stroke="#d8d62f" stroke-width="2"/><path d="M188 530C191 560 194 600 194 630" stroke="#27a58c" stroke-width="1.500"/>
      <path d="M189 398C208 372 208 262 231 262H441C455 250 458 150 459.500 90M441 262C461 280 456 448 473 448H697M441 262C460 275 458 607 473 607H864"/>
      <path d="M697 448C716 441 712 341 727 341H864M697 448C716 442 712 368 727 368H864M697 448C714 444 712 394 727 394H864M697 448C712 446 710 421 727 421H864M697 448H864M697 448C712 450 710 475 727 475H864M697 448C714 452 712 501 727 501H864M697 448C716 454 712 528 727 528H864M697 448C716 455 712 555 727 555H864"/>
      <path d="M697 607C712 605 710 581 727 581H864M697 607C708 608 712 622 716 630"/>
      <path d="M740 90C743 150 748 184 766 184H903M733 90C740 190 742 315 765 315H903"/>
      <rect x="724.500" y="612.500" width="140" height="25" rx="2" stroke="#888" stroke-width="1"/>
      <g transform="translate(730 90) scale(.3333)" stroke-width="2" stroke="#7a5a20" font-family="Liberation Serif,Noto Sans CJK SC,serif">
        <path d="M150 20h70l40 50-60 40-50-20zM160 150l-40 30 10 40 40-30zM390 100l60 20 40-60-40-40z" fill="#e3eef4" stroke="none"/>
        <path d="M163 52H385Q405 50 413 42A24 24 0 1 1 452 75Q425 85 420 100A55 55 0 0 1 365 163H311V227H297V208H272V132A27 27 0 1 0 250 132V208H228V227H213V163H163V136H181V80H163Z" fill="#eba33c" stroke="#4b3a20" stroke-width="3"/>
        <circle cx="365" cy="107" r="40" fill="#fff" stroke="#4b3a20" stroke-width="3"/><circle cx="434" cy="58" r="12" fill="#fff" stroke="#4b3a20" stroke-width="3"/>
        <path d="M163 22H262M163 12V50M262 15V225M132 55V225M125 55h36M125 163h36M125 227h86M152 80v56M165 40h18M228 250H296M228 228v26M297 228v26M213 268H311M213 228v44M311 228v44M332 200v45M230 178h60" stroke="#777"/>
        <path d="M365 0V170M150 107H505M505 0V270M408 165 475 118M440 15l20 20M470 60l30-32 6 75M413 130 475 95" stroke="#8a8fd0"/>
        <path d="M245 125 280 90M332 90 398 130M455 40 430 65" stroke="#555"/>
        <g fill="#444" stroke="none" font-size="15"><text x="205" y="20">42</text><text x="240" y="247">30±0.1</text><text x="240" y="265">40±0.1</text><text x="345" y="181" font-size="12" font-weight="700">【技巧】</text><text x="345" y="197" font-size="11">A=42, B=25, C=23, D=28, E=16</text><text x="383" y="27" transform="rotate(25 383 27)">R10</text><text x="122" y="190" transform="rotate(-90 130 190)">28</text><text x="122" y="115" transform="rotate(-90 130 112)">48</text><text x="230" y="176">9</text><text x="340" y="100" transform="rotate(40 345 97)">⌀34</text></g>
      </g>
      <g transform="translate(730 188) scale(.3333)" stroke="#4b565e" stroke-width="3" font-family="Noto Sans CJK SC,sans-serif">
        <path d="M115 20H505V370H115Z" fill="#dde9f1" stroke="none"/>
        <path d="M230 112A57 57 0 0 1 344 112C344 150 362 180 385 203A43 43 0 0 1 325 268Q287 232 250 268A43 43 0 1 1 197 200C225 175 230 150 230 112Z"/>
        <circle cx="287" cy="112" r="26"/><circle cx="217" cy="239" r="43"/><circle cx="217" cy="239" r="19"/><circle cx="360" cy="239" r="43"/><circle cx="360" cy="239" r="19"/>
        <path d="M200 87h85M200 138h85M208 70v85M218 245v100M360 245v100M218 338h142M345 35 300 95M340 165 375 130h105M205 160l85 78M395 213l55-45M400 262l50 30M262 262l25 30M318 210l75 55" stroke-width="2" stroke="#77838c"/>
        <path d="M287 50v125M245 112h85M217 185v95M360 185v95M165 239h245M287 112 217 239M287 112l73 127" stroke-width="1.500" stroke="#98a5af"/>
        <path d="m218 338 16-4v8zM360 338l-16-4v8zM328 62l12-10-4 14zM208 87l-4-14h8zM208 138l-4 14h8zM380 225l12-12-2 12zM400 262l12 4-4 8zM262 262l12 4-6 8z" fill="#333" stroke="none"/>
        <g fill="#4a5660" stroke="none" font-size="20"><text x="270" y="334">100</text><text x="133" y="172" font-size="19">草图原点</text><text x="381" y="122" font-size="19">虚线部分为</text><text x="381" y="147" font-size="19">等边三角形</text><text x="338" y="48" transform="rotate(-42 338 48)">R48</text><text x="404" y="205" transform="rotate(-30 404 205)">2-∅25</text><text x="405" y="265" transform="rotate(30 405 265)">2-∅60</text><text x="268" y="276" transform="rotate(55 268 276)" font-size="18">R60</text><text x="204" y="128" transform="rotate(-90 204 128)" font-size="17">∅36</text></g>
      </g>
    </svg>
    <h1 class="topic big">第二章--草图模块</h1>
    <p class="topic t-edit">草图编辑</p>
    <p class="topic t-3d">3D草图</p>
    <ul class="topic apply-list"><li>1.镜像命令的应用</li><li>2.线性阵列的应用</li><li>3.圆周阵列的应用</li><li>4.移动实体的应用</li><li>5.旋转实体的应用</li><li>6.复制实体的应用</li><li>7.缩放命令的应用</li><li>8.伸展实体的应用</li><li>9.草图综合练习题2</li></ul>
    <ul class="topic three-list"><li>认识坐标系</li><li>3D草图小技巧</li><li>3D草图练习题</li></ul>
    <div class="vbar"><i></i></div>
  </div>
  <div class="hbar flex-shrink-0"><i></i></div>
  <footer class="map-foot d-flex align-items-center justify-content-end flex-shrink-0">
    <span>主题: 1 / 96</span><span class="sep"></span>
    <button class="d-flex align-items-center gap-2">100%<svg width="7" height="10" viewBox="0 0 7 10" fill="none" stroke="#333"><path d="M1 3.500 3.500 1 6 3.500M1 6.500 3.500 9 6 6.500"/></svg></button>
    <span class="sep"></span><button>大纲</button>
  </footer>
</div>
<script src="https://cdn.jsdelivr.net/npm/bootstrap@5.3.0/dist/js/bootstrap.bundle.min.js"></script>
</body>
</html>
